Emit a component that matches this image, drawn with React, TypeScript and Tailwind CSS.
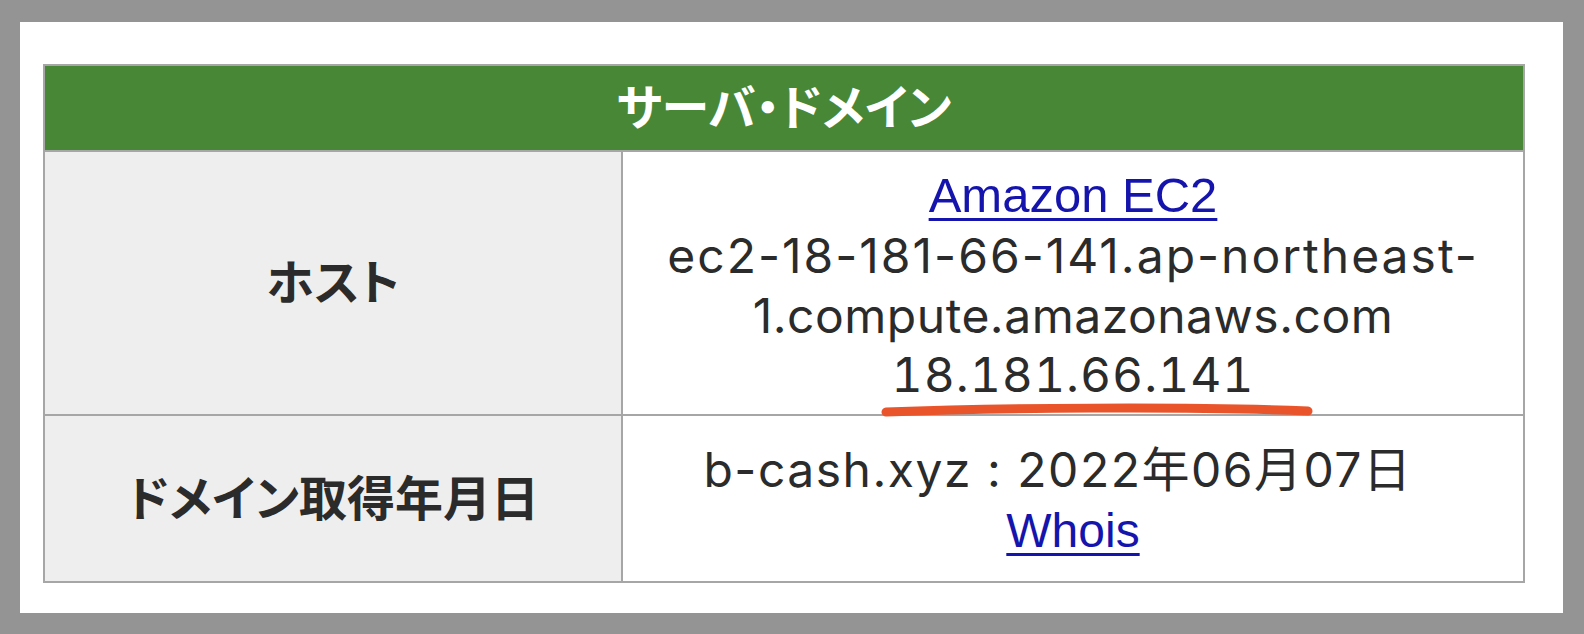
import React from 'react';

const BODY_FONT = "font-['Inter','Noto_Sans_CJK_JP',sans-serif] [font-feature-settings:'palt']";
const LINK_FONT = "font-['Liberation_Sans','Noto_Sans_CJK_JP',sans-serif]";

export default function App() {
  return (
    <div className="w-full h-[634px] bg-[#949494] pt-[22px] pl-[20px] pr-[21px] pb-[21px]">
      <div className="bg-white h-full pt-[42px] pl-[23px]">
        <table className={`w-[1482px] border-collapse text-[48px] leading-[1.24] text-[#2b2b2b] ${BODY_FONT}`}>
          <thead>
            <tr>
              <th
                colSpan={2}
                className="h-[86px] bg-[#488736] border-2 border-[#a6a6a6] text-white font-bold text-center align-middle"
              >
                サーバ・ドメイン
              </th>
            </tr>
          </thead>
          <tbody>
            {/* host row */}
            <tr>
              <th className="w-[578px] h-[264px] bg-[#eeeeee] border-2 border-[#a6a6a6] font-bold text-center align-middle">
                ホスト
              </th>
              <td className="border-2 border-[#a6a6a6] text-center align-middle px-6 pt-1 whitespace-nowrap">
                <div>
                  <a href="#" className={`text-[#1515ad] text-[49px] underline decoration-[3px] underline-offset-[6px] ${LINK_FONT}`}>
                    Amazon EC2
                  </a>
                </div>
                <div className="tracking-[2px]">ec2-18-181-66-141.ap-northeast-</div>
                <div className="tracking-[0.5px]">1.compute.amazonaws.com</div>
                <div>
                  <span className="relative inline-block tracking-[1px] [font-feature-settings:'tnum']">
                    18.181.66.141
                    {/* hand drawn highlight */}
                    <svg
                      className="absolute left-[-12px] top-[57px] pointer-events-none"
                      width="436"
                      height="16"
                      viewBox="0 0 436 16"
                    >
                      <path
                        d="M6 10 C 120 6, 300 4, 428 9"
                        stroke="#e9542b"
                        strokeWidth="9"
                        strokeLinecap="round"
                        fill="none"
                      />
                    </svg>
                  </span>
                </div>
              </td>
            </tr>
            {/* domain row */}
            <tr>
              <th className="h-[167px] bg-[#eeeeee] border-2 border-[#a6a6a6] font-bold text-center align-middle">
                ドメイン取得年月日
              </th>
              <td className="border-2 border-[#a6a6a6] text-center align-middle px-6 pt-1 whitespace-nowrap">
                <div className="tracking-[1.5px] pr-[30px]">b-cash.xyz : 2022年06月07日</div>
                <div>
                  <a href="#" className={`text-[#1515ad] underline decoration-[3px] underline-offset-[6px] ${LINK_FONT}`}>
                    Whois
                  </a>
                </div>
              </td>
            </tr>
          </tbody>
        </table>
      </div>
    </div>
  );
}
